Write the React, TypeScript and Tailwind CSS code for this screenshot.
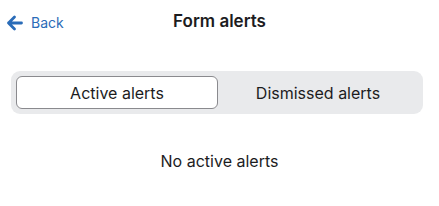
import React from "react";

export default function App() {
  return (
    <div className="w-[439px] h-[206px] bg-white overflow-hidden" style={{ fontFamily: "Inter, 'Noto Sans', sans-serif" }}>
      <div className="relative h-[43px] flex items-center justify-center">
        <button className="absolute left-[6px] top-[12px] flex items-center gap-[8px] text-[#2a6cb8] text-[14px]">
          <svg width="17" height="16" viewBox="0 0 17 16" fill="none">
            <path d="M15.5 8H2.5M8.5 2L2.5 8l6 6" stroke="#2a6cb8" strokeWidth="2.8" strokeLinecap="round" strokeLinejoin="round" />
          </svg>
          <span>Back</span>
        </button>
        <div className="text-[17px] font-semibold text-[#1c1c1e]">Form alerts</div>
      </div>
      <div className="px-[11px] pt-[28px]">
        <div className="w-[412px] h-[43px] bg-[#e9eaec] rounded-[9px] p-[5px] flex">
          <div className="flex-1 bg-white border border-[#8a8a8e] rounded-[6px] flex items-center justify-center text-[16px] text-[#1c1c1e]">
            Active alerts
          </div>
          <div className="flex-1 flex items-center justify-center text-[16px] text-[#1c1c1e]">
            Dismissed alerts
          </div>
        </div>
      </div>
      <div className="pt-[35px] text-center text-[16px] text-[#1c1c1e]">No active alerts</div>
    </div>
  );
}
